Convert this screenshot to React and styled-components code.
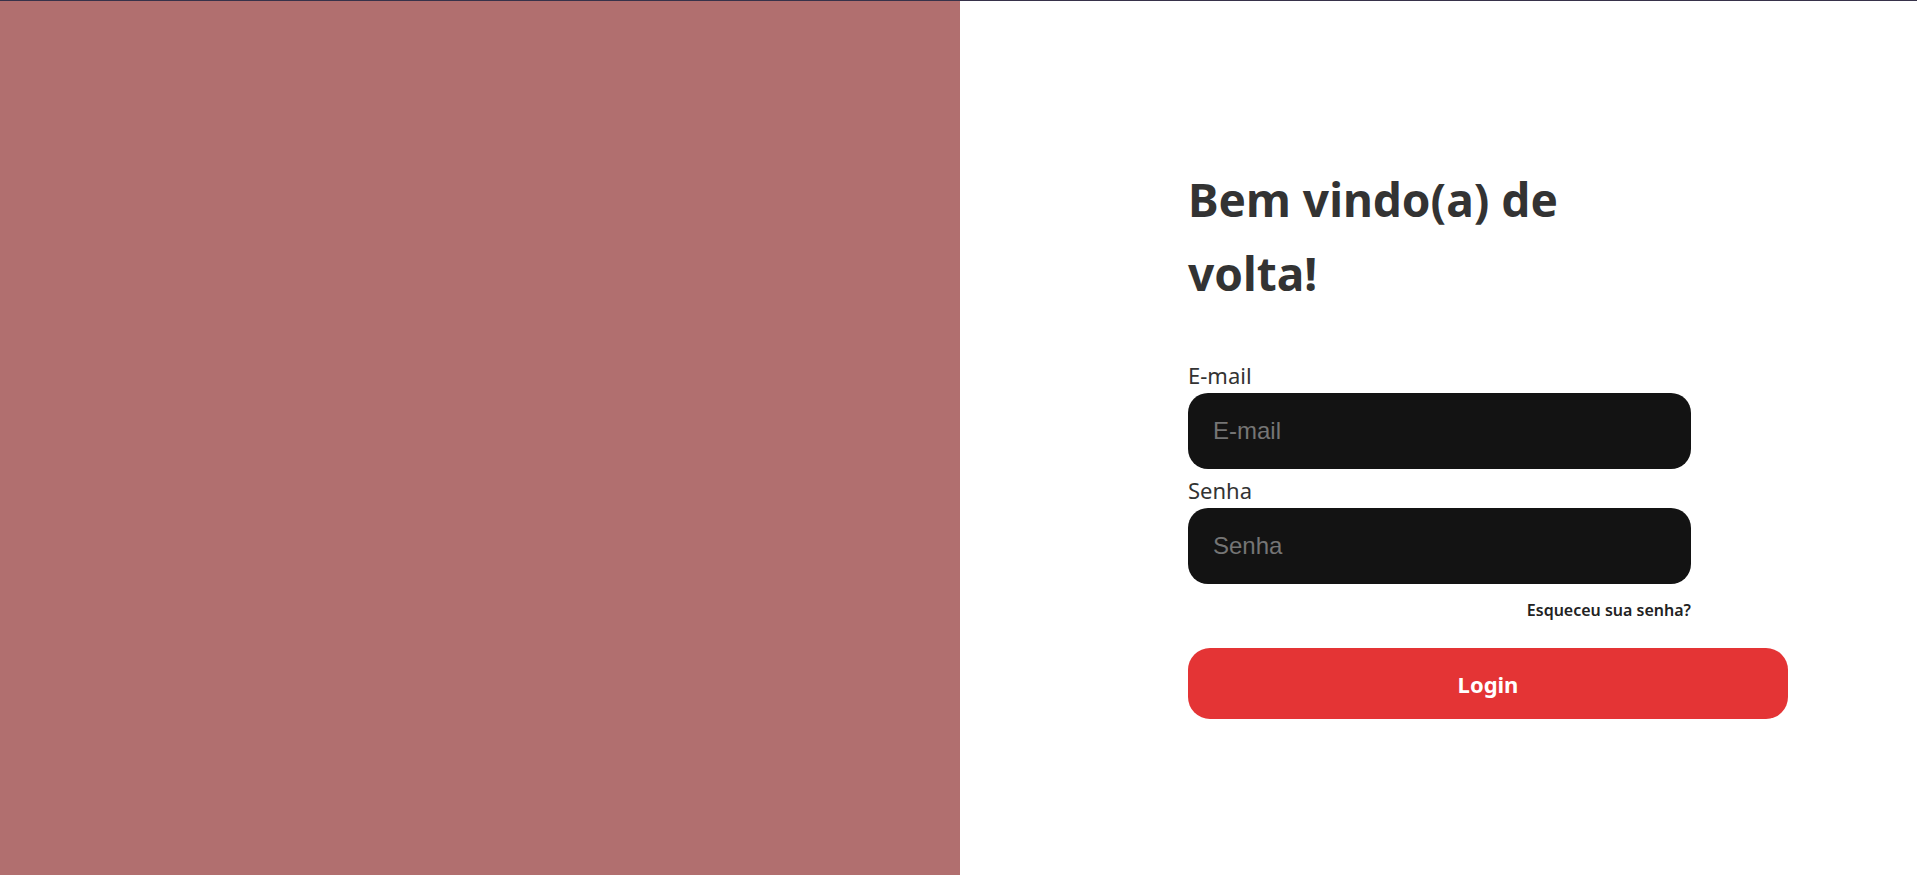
import React from 'react';
import styled, { createGlobalStyle } from 'styled-components';

const GlobalStyle = createGlobalStyle`
  * {
    box-sizing: border-box;
  }
  body {
    margin: 0;
    font-family: "Noto Sans", "Open Sans", sans-serif;
    background: #fff;
  }
`

const Container = styled.div`
  height: 100vh;
  width: 100%;
  display: grid;
  grid-template-columns: 960px 1fr;
  border-top: 1px solid #37324a;
`

const LeftContainer = styled.div`
  background-color: #b16f6f;
`

const RightContainer = styled.div`
  background-color: #fff;
  padding: 161px 0 0 228px;
`

const Title = styled.h1`
  margin: 0 0 50px;
  max-width: 420px;
  font-size: 46px;
  line-height: 74px;
  font-weight: 700;
  color: #333;
`

const Form = styled.form`
  display: flex;
  flex-direction: column;
  width: 600px;
`

const Field = styled.div`
  display: flex;
  flex-direction: column;
  gap: 3px;
  margin-top: ${props => (props.first ? '0' : '6px')};
`

const Label = styled.label`
  font-size: 22px;
  line-height: 30px;
  color: #333;
`

const Input = styled.input`
  width: 503px;
  height: 76px;
  padding: 0 25px;
  border: none;
  border-radius: 20px;
  background-color: #131313;
  color: #fff;
  font-family: "Liberation Sans", Arial, sans-serif;
  font-size: 24px;
  outline: none;

  &::placeholder {
    color: #757575;
  }
`

const Forgot = styled.a`
  display: block;
  width: 503px;
  margin-top: 16px;
  text-align: right;
  font-size: 16px;
  line-height: 21px;
  font-weight: 600;
  color: #222;
  text-decoration: none;
  cursor: pointer;
`

const ButtonCTA = styled.button`
  margin-top: 27px;
  width: 600px;
  height: 71px;
  border: none;
  border-radius: 22px;
  background-color: #e43435;
  color: #fff;
  font-family: "Noto Sans", "Open Sans", sans-serif;
  font-size: 22px;
  font-weight: 700;
  cursor: pointer;
`

const App = () => {
  return (
    <>
      <GlobalStyle />
      <Container>
        <LeftContainer />
        <RightContainer>
          <Title>Bem vindo(a) de volta!</Title>
          <Form onSubmit={e => e.preventDefault()}>
            <Field first>
              <Label htmlFor="email">E-mail</Label>
              <Input id="email" type="email" placeholder="E-mail" />
            </Field>
            <Field>
              <Label htmlFor="senha">Senha</Label>
              <Input id="senha" type="password" placeholder="Senha" />
            </Field>
            <Forgot>Esqueceu sua senha?</Forgot>
            <ButtonCTA type="submit">Login</ButtonCTA>
          </Form>
        </RightContainer>
      </Container>
    </>
  )
}

export default App
